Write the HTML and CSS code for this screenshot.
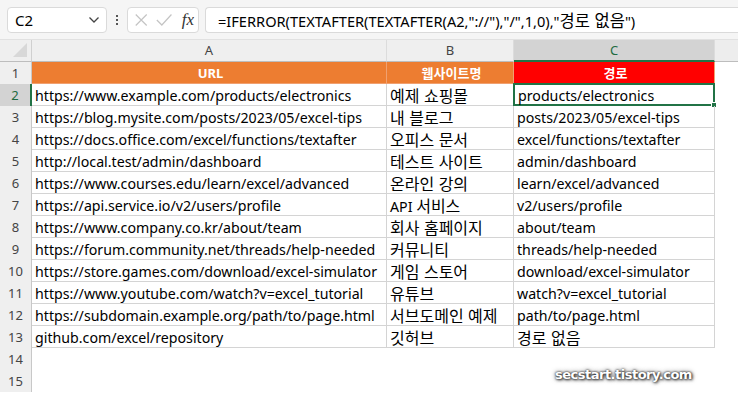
FILE: index.html
```html
<!DOCTYPE html>
<html lang="ko">
<head>
	<meta charset="UTF-8">
	<title>TEXTAFTER</title>
	<link rel="stylesheet" href="styles.css">
</head>
<body>
	<div class="topBar">
		<div class="nameBox">
			<span>C2</span>
			<svg class="chev" width="12" height="8" viewBox="0 0 12 8"><path d="M1.5 1.5 L6 6 L10.5 1.5" fill="none" stroke="#444" stroke-width="1.3"/></svg>
		</div>
		<div class="dots"><i></i><i></i><i></i></div>
		<div class="fxBox">
			<svg width="18" height="18" viewBox="0 0 18 18"><path d="M3 3 L15 15 M15 3 L3 15" stroke="#c4c4c4" stroke-width="1.3"/></svg>
			<svg width="20" height="18" viewBox="0 0 20 18"><path d="M2 9 L7.5 14.5 L18 3" fill="none" stroke="#c4c4c4" stroke-width="1.3"/></svg>
			<span class="fx">fx</span>
		</div>
		<div class="formula">=IFERROR(TEXTAFTER(TEXTAFTER(A2,"://"),"/",1,0),"<span class="ko">경로 없음</span>")</div>
	</div>

	<div class="sheet">
		<div class="corner"><span></span></div>
		<div class="colHead">A</div>
		<div class="colHead">B</div>
		<div class="colHead sel">C</div>
		<div class="colHead rest"></div>

		<div class="rowHead">1</div>
		<div class="cell h1">URL</div>
		<div class="cell h1">웹사이트명</div>
		<div class="cell h1 red">경로</div>
		<div class="blank"></div>

		<div class="rowHead sel">2</div>
		<div class="cell">https://www.example.com/products/electronics</div>
		<div class="cell ko">예제 쇼핑몰</div>
		<div class="cell active">products/electronics<span class="handle"></span></div>
		<div class="blank"></div>

		<div class="rowHead">3</div>
		<div class="cell">https://blog.mysite.com/posts/2023/05/excel-tips</div>
		<div class="cell ko">내 블로그</div>
		<div class="cell">posts/2023/05/excel-tips</div>
		<div class="blank"></div>

		<div class="rowHead">4</div>
		<div class="cell">https://docs.office.com/excel/functions/textafter</div>
		<div class="cell ko">오피스 문서</div>
		<div class="cell">excel/functions/textafter</div>
		<div class="blank"></div>

		<div class="rowHead">5</div>
		<div class="cell">http://local.test/admin/dashboard</div>
		<div class="cell ko">테스트 사이트</div>
		<div class="cell">admin/dashboard</div>
		<div class="blank"></div>

		<div class="rowHead">6</div>
		<div class="cell">https://www.courses.edu/learn/excel/advanced</div>
		<div class="cell ko">온라인 강의</div>
		<div class="cell">learn/excel/advanced</div>
		<div class="blank"></div>

		<div class="rowHead">7</div>
		<div class="cell">https://api.service.io/v2/users/profile</div>
		<div class="cell">API <span class="ko">서비스</span></div>
		<div class="cell">v2/users/profile</div>
		<div class="blank"></div>

		<div class="rowHead">8</div>
		<div class="cell">https://www.company.co.kr/about/team</div>
		<div class="cell ko">회사 홈페이지</div>
		<div class="cell">about/team</div>
		<div class="blank"></div>

		<div class="rowHead">9</div>
		<div class="cell">https://forum.community.net/threads/help-needed</div>
		<div class="cell ko">커뮤니티</div>
		<div class="cell">threads/help-needed</div>
		<div class="blank"></div>

		<div class="rowHead">10</div>
		<div class="cell">https://store.games.com/download/excel-simulator</div>
		<div class="cell ko">게임 스토어</div>
		<div class="cell">download/excel-simulator</div>
		<div class="blank"></div>

		<div class="rowHead">11</div>
		<div class="cell">https://www.youtube.com/watch?v=excel_tutorial</div>
		<div class="cell ko">유튜브</div>
		<div class="cell">watch?v=excel_tutorial</div>
		<div class="blank"></div>

		<div class="rowHead">12</div>
		<div class="cell">https://subdomain.example.org/path/to/page.html</div>
		<div class="cell ko">서브도메인 예제</div>
		<div class="cell">path/to/page.html</div>
		<div class="blank"></div>

		<div class="rowHead">13</div>
		<div class="cell">github.com/excel/repository</div>
		<div class="cell ko">깃허브</div>
		<div class="cell ko">경로 없음</div>
		<div class="blank"></div>

		<div class="rowHead">14</div>
		<div class="blank wide"></div>
		<div class="rowHead">15</div>
		<div class="blank wide"></div>
	</div>

	<div class="watermark">secstart.tistory.com</div>
</body>
</html>
```

FILE: styles.css
```css
* {
	box-sizing: border-box;
}

body {
	margin: 0;
	width: 738px;
	height: 396px;
	overflow: hidden;
	position: relative;
	background: #fff;
	font-family: "Noto Sans", "Noto Sans CJK KR", sans-serif;
	color: #000;
}

.ko {
	font-family: "Noto Sans CJK KR", sans-serif;
	font-size: 16px;
}

/********** formula bar **********/
.topBar {
	display: flex;
	align-items: center;
	height: 40px;
	padding: 7px 0 7px 7px;
	background: #f5f5f5;
	border-bottom: 1px solid #e1e1e1;
}
.nameBox {
	display: flex;
	align-items: center;
	justify-content: space-between;
	width: 100px;
	height: 26px;
	padding: 0 6px 0 7px;
	background: #fff;
	border: 1px solid #dadada;
	border-radius: 4px;
	font-size: 15px;
}
.dots {
	display: flex;
	flex-direction: column;
	gap: 2px;
	margin: 0 9px 0 9px;
}
.dots i {
	width: 2px;
	height: 2px;
	background: #555;
}
.fxBox {
	display: flex;
	align-items: center;
	gap: 6px;
	width: 72px;
	height: 26px;
	padding: 0 4px 0 5px;
	background: #fff;
	border: 1px solid #dadada;
	border-radius: 4px;
}
.fx {
	margin-left: 2px;
	font-family: "Liberation Serif", serif;
	font-style: italic;
	font-size: 17px;
	color: #333;
}
.formula {
	flex: 1;
	height: 26px;
	margin-left: 6px;
	padding: 0 0 0 12px;
	line-height: 25px;
	background: #fff;
	border: 1px solid #dadada;
	border-right: none;
	border-radius: 4px 0 0 4px;
	font-size: 14.6px;
	white-space: nowrap;
}
.formula .ko {
	font-size: 16.5px;
}

/********** sheet grid **********/
.sheet {
	display: grid;
	grid-template-columns: 32px 355px 127px 201px 23px;
	grid-auto-rows: 22px;
}
.corner {
	position: relative;
	background: #efefef;
	border-right: 1px solid #d0d0d0;
	border-bottom: 1px solid #bdbdbd;
}
.corner span {
	position: absolute;
	right: 4px;
	bottom: 4px;
	width: 0;
	height: 0;
	border-left: 14px solid transparent;
	border-bottom: 14px solid #d8d8d8;
}
.colHead {
	background: #efefef;
	border-right: 1px solid #dcdcdc;
	border-bottom: 1px solid #bdbdbd;
	text-align: center;
	font-size: 13px;
	line-height: 21px;
	color: #444;
}
.colHead.sel {
	background: #d3d3d3;
	color: #1e6b41;
	border-bottom: 2px solid #217346;
}
.colHead.rest {
	background: #ededed;
	border-right: none;
}
.rowHead {
	background: #efefef;
	border-right: 1px solid #c8c8c8;
	text-align: center;
	font-size: 13px;
	line-height: 23px;
	color: #444;
}
.rowHead.sel {
	background: #d3d3d3;
	color: #1e6b41;
	border-right: 2px solid #217346;
}
.cell {
	position: relative;
	padding: 1px 0 0 3px;
	border-right: 1px solid #d4d4d4;
	border-bottom: 1px solid #d4d4d4;
	font-size: 14.2px;
	line-height: 21px;
	white-space: nowrap;
}
.cell.ko {
	font-size: 16px;
}
.cell.h1 {
	background: #ed7d31;
	color: #fff;
	font-weight: bold;
	font-size: 13px;
	text-align: center;
	border-color: #f0a070;
}
.cell.red {
	background: #ff0000;
}
.cell.active {
	border: 2px solid #217346;
	margin: -1px 0 0 -1px;
	padding: 0 0 0 3px;
	line-height: 21px;
}
.handle {
	position: absolute;
	right: -4px;
	bottom: -4px;
	width: 6px;
	height: 6px;
	background: #217346;
	border: 1px solid #fff;
}
.blank.wide {
	grid-column: 2 / 6;
}

/********** watermark **********/
.watermark {
	position: absolute;
	left: 555px;
	top: 367px;
	font-family: "DejaVu Sans", sans-serif;
	font-weight: bold;
	font-size: 13px;
	letter-spacing: -0.5px;
	color: #fff;
	text-shadow: 0 0 2px #222, 1px 1px 3px #333, 0 0 5px #666;
}
```
